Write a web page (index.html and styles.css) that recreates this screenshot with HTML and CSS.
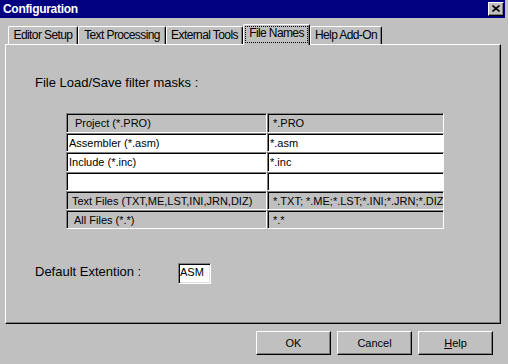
FILE: index.html
```html
<!DOCTYPE html>
<html lang="en">
<head>
    <meta charset="UTF-8">
    <title>Configuration</title>
    <link rel="stylesheet" href="styles.css">
</head>
<body>
    <div class="window">
        <div class="titlebar">
            <span class="title">Configuration</span>
            <button class="close" title="Close">
                <svg width="8" height="7" viewBox="0 0 8 7">
                    <path d="M0.5 0.5 L7.5 6.5 M7.5 0.5 L0.5 6.5" stroke="#000" stroke-width="1.6" fill="none"/>
                </svg>
            </button>
        </div>

        <div class="tabs">
            <div class="tab tab-editor">Editor Setup</div>
            <div class="tab tab-text">Text Processing</div>
            <div class="tab tab-tools">External Tools</div>
            <div class="tab tab-files selected"><span class="focus">File Names</span></div>
            <div class="tab tab-help">Help Add-On</div>
        </div>

        <div class="panel">
            <p class="caption">File Load/Save filter masks :</p>

            <div class="masks">
                <div class="cell head">Project (*.PRO)</div>
                <div class="cell head right">*.PRO</div>
                <div class="cell edit">Assembler (*.asm)</div>
                <div class="cell edit right">*.asm</div>
                <div class="cell edit">Include (*.inc)</div>
                <div class="cell edit right">*.inc</div>
                <div class="cell edit"></div>
                <div class="cell edit right"></div>
                <div class="cell head tight">Text Files (TXT,ME,LST,INI,JRN,DIZ)</div>
                <div class="cell head right">*.TXT; *.ME;*.LST;*.INI;*.JRN;*.DIZ</div>
                <div class="cell head mid">All Files (*.*)</div>
                <div class="cell head right">*.*</div>
            </div>

            <div class="default-ext">
                <label for="ext">Default Extention :</label>
                <span class="ext-box" id="ext">ASM</span>
            </div>
        </div>

        <div class="buttons">
            <button class="btn">OK</button>
            <button class="btn">Cancel</button>
            <button class="btn"><u>H</u>elp</button>
        </div>
    </div>
</body>
</html>
```

FILE: styles.css
```css
body {
    margin: 0;
    background-color: #c0c0c0;
    font-family: "Liberation Sans", Arial, sans-serif;
    color: #000;
}
.window {
    width: 508px;
    height: 364px;
    overflow: hidden;
}
.titlebar {
    display: flex;
    align-items: center;
    justify-content: space-between;
    width: 505px;
    height: 18px;
    box-sizing: border-box;
    padding: 0 1px 0 3px;
    background-color: #000080;
}
.title {
    color: white;
    font-weight: bold;
    font-size: 12px;
    letter-spacing: -0.3px;
    line-height: 18px;
}
.close {
    display: flex;
    align-items: center;
    justify-content: center;
    width: 16px;
    height: 14px;
    padding: 0;
    margin: 0;
    background-color: #c0c0c0;
    border-top: 1px solid #fff;
    border-left: 1px solid #fff;
    border-right: 1px solid #000;
    border-bottom: 1px solid #000;
    box-shadow: inset -1px -1px 0 #808080;
    box-sizing: border-box;
}
.close svg {
    display: block;
    margin-top: -1px;
}

/* tab strip */
.tabs {
    display: flex;
    align-items: flex-end;
    height: 20px;
    margin-top: 6px;
    padding-left: 8px;
}
.tab {
    box-sizing: border-box;
    height: 18px;
    border-top: 1px solid #fff;
    border-left: 1px solid #fff;
    border-right: 1px solid #000;
    border-radius: 2px 2px 0 0;
    box-shadow: inset -1px 0 0 #808080;
    font-size: 12px;
    letter-spacing: -0.6px;
    line-height: 16px;
    text-align: center;
    white-space: nowrap;
}
.tab-editor { width: 70px; }
.tab-text { width: 88px; }
.tab-tools { width: 77px; }
.tab-files { width: 67px; }
.tab-help { width: 72px; }
.tab.selected {
    position: relative;
    z-index: 1;
    height: 21px;
    margin-bottom: -1px;
    background-color: #c0c0c0;
}
.focus {
    display: block;
    height: 15px;
    margin: 1px 1px 0 1px;
    border: 1px dotted #000;
    line-height: 13px;
}

/* page */
.panel {
    box-sizing: border-box;
    width: 496px;
    height: 280px;
    margin-left: 5px;
    padding: 30px 0 0 29px;
    border-top: 1px solid #fff;
    border-left: 1px solid #fff;
    border-right: 1px solid #000;
    border-bottom: 1px solid #000;
    box-shadow: inset -1px -1px 0 #808080;
}
.caption {
    margin: 0;
    font-size: 13px;
    line-height: 15px;
}
.masks {
    display: grid;
    grid-template-columns: 201px 177px;
    grid-template-rows: 20px 19px 20px 19px 19px 19px;
    margin: 23px 0 0 31px;
}
.cell {
    box-sizing: border-box;
    border-top: 1px solid #808080;
    border-left: 1px solid #808080;
    border-right: 1px solid #fff;
    border-bottom: 1px solid #fff;
    box-shadow: inset 1px 1px 0 #000;
    font-size: 11px;
    line-height: 16px;
    padding-top: 1px;
    white-space: nowrap;
    overflow: hidden;
}
.head {
    padding-left: 8px;
}
.head.tight {
    padding-left: 5px;
}
.head.mid {
    padding-left: 7px;
}
.head.right {
    padding-left: 5px;
}
.edit {
    background-color: #fff;
    padding-left: 2px;
}
.edit.right {
    padding-left: 2px;
}
.default-ext {
    display: flex;
    align-items: flex-start;
    margin-top: 34px;
}
.default-ext label {
    width: 143px;
    padding-top: 1px;
    font-size: 13px;
    line-height: 15px;
}
.ext-box {
    box-sizing: border-box;
    width: 33px;
    height: 21px;
    padding-left: 1px;
    background-color: #fff;
    border-top: 1px solid #808080;
    border-left: 1px solid #808080;
    border-right: 1px solid #fff;
    border-bottom: 1px solid #fff;
    box-shadow: inset 1px 1px 0 #000, inset -1px -1px 0 #dfdfdf;
    font-size: 11px;
    line-height: 17px;
}

/* dialog buttons */
.buttons {
    display: flex;
    justify-content: flex-end;
    gap: 6px;
    margin-top: 7px;
    padding-right: 15px;
}
.btn {
    box-sizing: border-box;
    width: 75px;
    height: 24px;
    padding: 0;
    background-color: #c0c0c0;
    border-top: 1px solid #fff;
    border-left: 1px solid #fff;
    border-right: 1px solid #000;
    border-bottom: 1px solid #000;
    box-shadow: inset -1px -1px 0 #808080;
    font-family: "Liberation Sans", Arial, sans-serif;
    font-size: 11px;
    line-height: 22px;
    color: #000;
}
```
